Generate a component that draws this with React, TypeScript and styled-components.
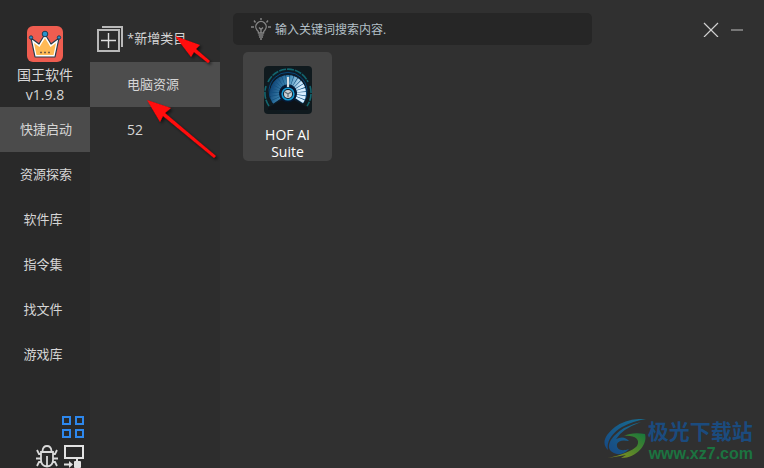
import React, { useState } from "react";
import styled, { createGlobalStyle } from "styled-components";

const GlobalStyle = createGlobalStyle`
  * { box-sizing: border-box; }
  body {
    margin: 0;
    background: #303030;
    color: #d6d6d6;
    font-family: "Open Sans", "Noto Sans CJK SC", sans-serif;
    font-size: 13px;
  }
  button, input { font: inherit; color: inherit; }
`;

const Shell = styled.div`
  position: relative;
  display: grid;
  grid-template-columns: 90px 130px 1fr;
  height: 100vh;
  overflow: hidden;
`;

const Sidebar = styled.aside`
  display: flex;
  flex-direction: column;
  background: #292929;
`;

const Brand = styled.header`
  display: flex;
  flex-direction: column;
  align-items: center;
  height: 107px;
  padding-top: 26px;
  font-size: 14px;
  line-height: 20px;
  text-align: center;
  svg { flex: none; margin-bottom: 3px; }
`;

const Nav = styled.nav`
  display: flex;
  flex-direction: column;
`;

const NavButton = styled.button<{ $active: boolean; $short: boolean }>`
  height: 45px;
  border: 0;
  padding: ${(p) => (p.$short ? "0 4px 2px 0" : "0 0 2px 2px")};
  background: ${(p) => (p.$active ? "#4b4b4b" : "transparent")};
  line-height: 20px;
`;

const Tools = styled.div`
  display: grid;
  grid-template-columns: 22px 22px;
  gap: 7px 4px;
  justify-content: end;
  margin-top: auto;
  padding-right: 6px;
`;

const IconButton = styled.button`
  display: flex;
  align-items: center;
  justify-content: center;
  padding: 0;
  border: 0;
  background: transparent;
  &:first-child:nth-last-child(3) { grid-column: 2; }
`;

const Categories = styled.section`
  display: flex;
  flex-direction: column;
  background: #2d2d2d;
`;

const AddButton = styled.button`
  display: flex;
  align-items: center;
  gap: 4px;
  height: 62px;
  padding: 16px 0 0 7px;
  border: 0;
  background: transparent;
  white-space: nowrap;
  line-height: 20px;
  span { padding-bottom: 2px; }
`;

const CategoryButton = styled.button<{ $active: boolean; $numeric: boolean }>`
  height: 45px;
  padding: ${(p) => (p.$numeric ? "0 0 0 37px" : "0 0 2px 37px")};
  border: 0;
  background: ${(p) => (p.$active ? "#4d4d4d" : "transparent")};
  font-size: ${(p) => (p.$numeric ? "14px" : "13px")};
  line-height: 20px;
  text-align: left;
`;

const Main = styled.main`
  display: flex;
  flex-direction: column;
  padding: 13px 20px 0 13px;
  background: #303030;
`;

const TopBar = styled.div`
  display: flex;
  align-items: center;
  justify-content: space-between;
`;

const Search = styled.label`
  display: flex;
  align-items: center;
  gap: 4px;
  flex: 0 1 359px;
  height: 32px;
  padding-left: 18px;
  border-radius: 5px;
  background: #262626;
`;

const SearchInput = styled.input`
  flex: 1;
  min-width: 0;
  padding: 0;
  border: 0;
  outline: 0;
  background: transparent;
  font-size: 12px;
  &::placeholder { color: #b4c0c8; opacity: 1; }
`;

const WindowControls = styled.div`
  display: flex;
  gap: 11px;
`;

const Apps = styled.div`
  display: flex;
  flex-wrap: wrap;
  gap: 10px;
  padding: 7px 10px;
`;

const AppCard = styled.button`
  display: flex;
  flex-direction: column;
  align-items: center;
  gap: 12px;
  width: 89px;
  height: 109px;
  padding: 14px 8px 0;
  border: 0;
  border-radius: 5px;
  background: #434343;
  color: #fff;
  font-size: 14px;
  line-height: 17px;
  svg { flex: none; }
`;

const Arrows = styled.svg`
  position: absolute;
  left: 140px;
  top: 30px;
  pointer-events: none;
`;

const Watermark = styled.a`
  position: absolute;
  right: 11px;
  bottom: 5px;
  display: flex;
  align-items: center;
  color: #1b4b7e;
  text-decoration: none;
  svg { flex: none; }
`;

const WatermarkText = styled.span`
  display: flex;
  flex-direction: column;
`;

const SiteName = styled.span`
  font: 700 21px/30px "Noto Sans CJK SC", sans-serif;
`;

const SiteAddress = styled.span`
  padding-left: 1px;
  color: #1c7340;
  font: 700 16px/18px "Liberation Sans", sans-serif;
`;

const CrownLogo = () => (
  <svg width="36" height="36" viewBox="0 0 36 36" aria-hidden="true">
    <rect width="36" height="36" rx="6" fill="#ef5d50" />
    <path d="M4 12 8 31H28L32 12 24 18 18 8 12 18Z" fill="#fff" stroke="#263b4b" strokeWidth="1.200" strokeLinejoin="round" />
    <path d="M7 17 12.500 21 18 12 23.500 21 29 17 26.500 29H9.500Z" fill="#ffba55" />
    <g fill="#2792cd" stroke="#203c51"><circle cx="18" cy="8" r="2.800" /><circle cx="4" cy="11.500" r="1.700" /><circle cx="32" cy="11.500" r="1.700" /></g>
    <path d="M13 26.500h10" stroke="#765b43" strokeWidth="1.400" strokeDasharray="2 2" />
  </svg>
);

const AddIcon = () => (
  <svg width="26" height="26" viewBox="0 0 26 26" fill="none" stroke="#b9b9b9" strokeWidth="2" aria-hidden="true">
    <path d="M1 4h21v21H1zM5 1h20v20" />
    <path d="M11.500 7v15M4 14.500h15" stroke="#dedede" strokeWidth="1.400" />
  </svg>
);

const GridIcon = () => (
  <svg width="22" height="22" viewBox="0 0 22 22" fill="none" stroke="#2d87ec" strokeWidth="2" aria-hidden="true">
    <path d="M1 1h7v7H1zM14 1h7v7h-7zM1 14h7v7H1zM14 14h7v7h-7z" />
  </svg>
);

const BugIcon = () => (
  <svg width="22" height="23" viewBox="0 0 22 23" fill="none" stroke="#d9d9d9" strokeWidth="1.800" aria-hidden="true">
    <path d="M6.500 6Q7 1 11 1t4.500 5M5 7h12v8q0 6-6 6.500Q5 21 5 15zM11 11v10M5 9H3L1 5M17 9h2l2-4M5 13.500H0M17 13.500h5M5 17H3l-2 4M17 17h2l2 4" />
  </svg>
);

const MonitorIcon = () => (
  <svg width="22" height="23" viewBox="0 0 22 23" fill="none" stroke="#e1e1e1" strokeWidth="2" aria-hidden="true">
    <path d="M3 1h18v12H3zM15 13v5M2 19.500h6" />
    <path d="m7 16 4 3.500L7 23z" fill="#e1e1e1" stroke="none" />
    <rect x="12" y="16" width="7" height="7" rx="1" fill="#e1e1e1" stroke="none" />
  </svg>
);

const BulbIcon = () => (
  <svg width="20" height="22" viewBox="0 0 20 22" fill="none" stroke="#858585" strokeWidth="1.400" aria-hidden="true">
    <path d="M7.500 15q0-2-1.500-3a5.200 5.200 0 1 1 8 0q-1.500 1-1.500 3zM8 9.500l2 2 2-2M10 11.500V15" />
    <path d="M7.500 17h5M8 19h4M9 21h2M10 0v2M3 2.500l1.500 2M17 2.500l-1.500 2M0 9h3M17 9h3" />
  </svg>
);

const GaugeIcon = () => (
  <svg width="48" height="48" viewBox="0 0 48 48" fill="none" aria-hidden="true">
    <defs>
      <radialGradient id="gaugeBack"><stop stopColor="#062144" /><stop offset="1" stopColor="#101a1e" /></radialGradient>
      <linearGradient id="gaugeFan" x2="1" y2=".3"><stop stopColor="#124779" /><stop offset=".5" stopColor="#438eb8" /><stop offset="1" stopColor="#d9efff" /></linearGradient>
    </defs>
    <rect width="48" height="48" rx="4" fill="url(#gaugeBack)" />
    <path d="M5 40A23 23 0 0 1 2 20M4 16A22 22 0 0 1 44 16M46 20a23 23 0 0 1-3 20" stroke="#12656e" strokeWidth="1.600" strokeDasharray="7 1" />
    <path d="M9 37A19 19 0 1 1 39 37" stroke="#064779" strokeWidth="1" />
    <path d="M13 35A13.500 13.500 0 1 1 35 35" stroke="#115080" strokeWidth="9" />
    <path d="M13 35A13.500 13.500 0 1 1 35 35" stroke="url(#gaugeFan)" strokeWidth="9" strokeDasharray="2.500 .6" />
    <path d="M4 42 18 34q6 4 12 0l14 8v2H4z" fill="#0d1218" />
    <circle cx="24" cy="28" r="8.500" fill="#061832" />
    <circle cx="24" cy="28" r="5.800" fill="#111d29" stroke="#159bd3" strokeWidth="1.600" />
    <path d="M24 11v10" stroke="#d8e1e5" strokeWidth="2.200" />
    <circle cx="24" cy="28" r="4" fill="#c9d0d3" />
    <path d="m24 28-3-2M24 28l3-2M24 28v3" stroke="#5d6f78" strokeWidth="1.200" />
  </svg>
);

const Swirl = () => (
  <svg width="44" height="40" viewBox="0 0 44 40" aria-hidden="true">
    <defs>
      <linearGradient id="swirlBlue" x1="1" x2="0" y2="1"><stop stopColor="#176e91" /><stop offset="1" stopColor="#174983" /></linearGradient>
      <linearGradient id="swirlGreen" x1="1" x2="0" y2="1"><stop stopColor="#16763c" /><stop offset="1" stopColor="#8d931c" /></linearGradient>
    </defs>
    <path d="M42 0Q23-1 11 8C1 16-3 24 4 31 2 23 8 14 18 8Q29 2 42 0" fill="url(#swirlBlue)" />
    <path d="M37 3Q19 7 10 17C2 26 4 33 13 35Q20 36 25 30C17 33 12 30 13 25Q15 20 25 22 20 16 12 20 18 10 37 3" fill="url(#swirlBlue)" />
    <path d="M20 17Q28 13 41 15C44 25 33 39 17 39L22 36 4 39Q26 34 33 27C37 20 30 16 20 17" fill="url(#swirlGreen)" />
  </svg>
);

const navItems = ["快捷启动", "资源探索", "软件库", "指令集", "找文件", "游戏库"];
const categories = ["电脑资源", "52"];

export default function App() {
  const [section, setSection] = useState(navItems[0]);
  const [category, setCategory] = useState(categories[0]);
  return (
    <>
      <GlobalStyle />
      <Shell>
        <Sidebar>
          <Brand><CrownLogo /><span>国王软件</span><span>v1.9.8</span></Brand>
          <Nav>
            {navItems.map((item) => (
              <NavButton key={item} $active={item === section} $short={item.length < 4} onClick={() => setSection(item)}>{item}</NavButton>
            ))}
          </Nav>
          <Tools>
            <IconButton aria-label="网格"><GridIcon /></IconButton>
            <IconButton aria-label="反馈"><BugIcon /></IconButton>
            <IconButton aria-label="远程"><MonitorIcon /></IconButton>
          </Tools>
        </Sidebar>
        <Categories>
          <AddButton><AddIcon /><span>*新增类目</span></AddButton>
          {categories.map((item) => (
            <CategoryButton key={item} $active={item === category} $numeric={/^\d+$/.test(item)} onClick={() => setCategory(item)}>{item}</CategoryButton>
          ))}
        </Categories>
        <Main>
          <TopBar>
            <Search><BulbIcon /><SearchInput aria-label="搜索" placeholder="输入关键词搜索内容." /></Search>
            <WindowControls>
              <IconButton aria-label="关闭">
                <svg width="16" height="16" viewBox="0 0 16 16" stroke="#d0d0d0" strokeWidth="1.200"><path d="m1 2 14 14M15 2 1 16" /></svg>
              </IconButton>
              <IconButton aria-label="最小化">
                <svg width="14" height="16" viewBox="0 0 14 16" stroke="#777" strokeWidth="2"><path d="M1 9h12" /></svg>
              </IconButton>
            </WindowControls>
          </TopBar>
          <Apps><AppCard><GaugeIcon /><span>HOF AI Suite</span></AppCard></Apps>
        </Main>
        <Arrows width="82" height="134" viewBox="0 0 82 134" fill="#ff0808" aria-hidden="true">
          <defs><filter id="arrowShadow"><feDropShadow dx="2" dy="2" stdDeviation="1.5" floodColor="#000" floodOpacity=".6" /></filter></defs>
          <g filter="url(#arrowShadow)">
            <path d="M35 6 60 15 56 19 70 31 68 33 54 22 51 27Z" />
            <path d="M7 70 31 78 25 83 76 126 74 128 23 86 20 92Z" />
          </g>
        </Arrows>
        <Watermark href="http://www.xz7.com"><Swirl /><WatermarkText><SiteName>极光下载站</SiteName><SiteAddress>www.xz7.com</SiteAddress></WatermarkText></Watermark>
      </Shell>
    </>
  );
}
